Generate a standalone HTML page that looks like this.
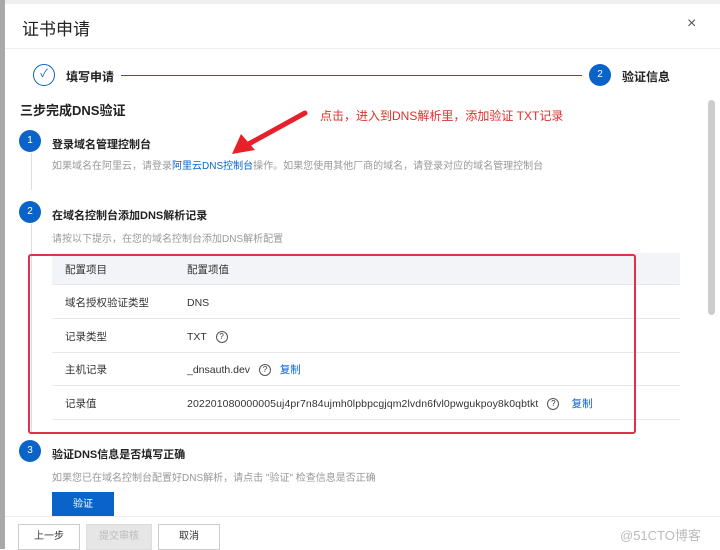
<!DOCTYPE html>
<html><head><meta charset="utf-8"><style>
*{margin:0;padding:0;box-sizing:border-box}
body{width:720px;height:549px;overflow:hidden;background:#fff;font-family:"Liberation Sans","Noto Sans CJK SC",sans-serif;position:relative;color:#333}
.a{position:absolute;white-space:nowrap}
.c{position:absolute;border-radius:50%;background:#0a63c9;color:#fff;font-size:10px;text-align:center}
.t{font-size:11px;font-weight:bold;color:#222}
.g{font-size:10px;color:#999}
.row{position:absolute;left:52px;width:628px;height:34px;border-bottom:1px solid #e8e8e8;font-size:10.5px;color:#333}
.row span{position:absolute;top:2px;line-height:33px}
.q{display:inline-block;width:12px;height:12px;border:1px solid #555;border-radius:50%;font-size:8px;text-align:center;line-height:10px;vertical-align:middle;margin-left:6px;font-style:normal}
.lk{color:#0a63c9;font-weight:normal}
.btn{position:absolute;top:524px;height:26px;border:1px solid #ccc;font-size:10px;text-align:center;line-height:24px;background:#fff}
</style></head><body>
<div class="a" style="left:0;top:0;width:5px;height:549px;background:#a9a9a9"></div>
<div class="a" style="left:5px;top:0;width:715px;height:4px;background:#eee"></div>
<div class="a" style="left:22px;top:15px;font-size:17px;color:#222">证书申请</div>
<div class="a" style="left:687px;top:15px;font-size:16px;color:#555">×</div>
<div class="a" style="left:5px;top:48px;width:715px;height:1px;background:#eee"></div>
<div class="a" style="left:33px;top:64px;width:22px;height:22px;border:1.5px solid #0a63c9;border-radius:50%;color:#0a63c9;font-size:11px;text-align:center;line-height:19px">✓</div>
<div class="a" style="left:66px;top:68px;font-size:12px;font-weight:bold;color:#222">填写申请</div>
<div class="a" style="left:121px;top:75px;width:461px;height:1px;background:#0a63c9"></div>
<div class="c" style="left:589px;top:64px;width:22px;height:22px;line-height:22px">2</div>
<div class="a" style="left:622px;top:68px;font-size:12px;font-weight:bold;color:#222">验证信息</div>
<div class="a" style="left:708px;top:100px;width:7px;height:215px;background:#ccc;border-radius:4px"></div>
<div class="a" style="left:20px;top:100px;font-size:13px;font-weight:bold;color:#222">三步完成DNS验证</div>
<div class="a" style="left:320px;top:107px;font-size:12px;color:#e0302a">点击，进入到DNS解析里，添加验证 TXT记录</div>
<svg class="a" style="left:225px;top:108px" width="85" height="52"><line x1="80" y1="5" x2="20" y2="38" stroke="#e8202a" stroke-width="5" stroke-linecap="round"/><polygon points="7,46 16,26 30,42" fill="#e8202a"/></svg>
<div class="c" style="left:19px;top:130px;width:22px;height:22px;line-height:22px">1</div>
<div class="a t" style="left:52px;top:136px">登录域名管理控制台</div>
<div class="a g" style="left:52px;top:157px">如果域名在阿里云，请登录<span class="lk">阿里云DNS控制台</span>操作。如果您使用其他厂商的域名，请登录对应的域名管理控制台</div>
<div class="a" style="left:31px;top:153px;width:1px;height:37px;background:#ddd"></div>
<div class="c" style="left:19px;top:201px;width:22px;height:22px;line-height:22px">2</div>
<div class="a t" style="left:52px;top:207px">在域名控制台添加DNS解析记录</div>
<div class="a g" style="left:52px;top:230px">请按以下提示，在您的域名控制台添加DNS解析配置</div>
<div class="a" style="left:31px;top:224px;width:1px;height:210px;background:#ddd"></div>
<div class="row" style="top:253px;height:32px;background:#f2f4f7"><span style="left:13px;line-height:31px">配置项目</span><span style="left:135px;line-height:31px">配置项值</span></div>
<div class="row" style="top:285px"><span style="left:13px">域名授权验证类型</span><span style="left:135px">DNS</span></div>
<div class="row" style="top:319px"><span style="left:13px">记录类型</span><span style="left:135px">TXT <i class="q">?</i></span></div>
<div class="row" style="top:352px"><span style="left:13px">主机记录</span><span style="left:135px">_dnsauth.dev <i class="q">?</i> &nbsp; <b class="lk">复制</b></span></div>
<div class="row" style="top:386px"><span style="left:13px">记录值</span><span style="left:135px;letter-spacing:0.1px">202201080000005uj4pr7n84ujmh0lpbpcgjqm2lvdn6fvl0pwgukpoy8k0qbtkt <i class="q">?</i> &nbsp;&nbsp; <b class="lk">复制</b></span></div>
<div class="a" style="left:28px;top:254px;width:608px;height:180px;border:2px solid #e0304a;border-radius:3px"></div>
<div class="c" style="left:19px;top:440px;width:22px;height:22px;line-height:22px">3</div>
<div class="a t" style="left:52px;top:446px">验证DNS信息是否填写正确</div>
<div class="a g" style="left:52px;top:469px">如果您已在域名控制台配置好DNS解析，请点击 "验证" 检查信息是否正确</div>
<div class="a" style="left:52px;top:492px;width:62px;height:25px;background:#0a63c9;color:#fff;font-size:10px;text-align:center;line-height:25px">验证</div>
<div class="a" style="left:5px;top:516px;width:715px;height:33px;background:#fff;border-top:1px solid #eee"></div>
<div class="btn" style="left:18px;width:62px">上一步</div>
<div class="btn" style="left:86px;width:66px;background:#e6e6e6;color:#bbb;border-color:#ddd">提交审核</div>
<div class="btn" style="left:158px;width:62px">取消</div>
<div class="a" style="left:620px;top:525px;font-size:13px;color:#bbb">@51CTO博客</div>
</body></html>
